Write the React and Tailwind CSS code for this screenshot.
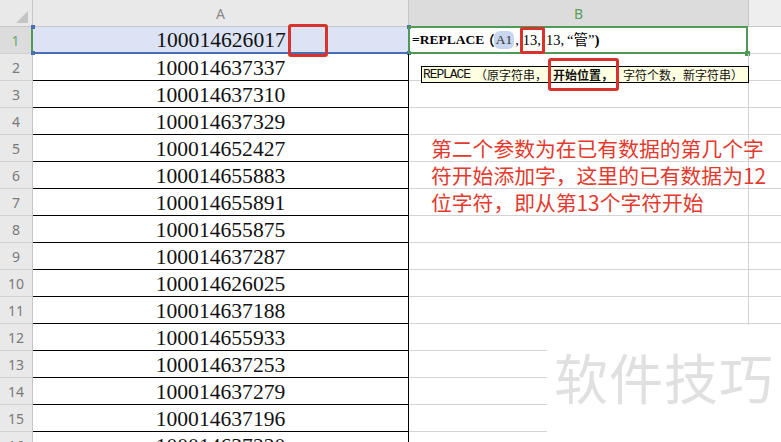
import React from "react";

const rows = [
  "100014626017",
  "100014637337",
  "100014637310",
  "100014637329",
  "100014652427",
  "100014655883",
  "100014655891",
  "100014655875",
  "100014637287",
  "100014626025",
  "100014637188",
  "100014655933",
  "100014637253",
  "100014637279",
  "100014637196",
  "100014637220",
];

const serif = { fontFamily: '"Liberation Serif", "Noto Sans CJK SC", serif' };
const cjk = { fontFamily: '"Noto Sans CJK SC", sans-serif' };

export default function App() {
  return (
    <div className="relative w-[781px] h-[442px] overflow-hidden bg-white">
      {/* column header */}
      <div className="flex h-[27px] border-b border-[#c6c6c6] bg-[#e9e9e9]">
        <div className="w-[33px] shrink-0 border-r border-[#c6c6c6] flex items-end justify-end pr-[4px] pb-[3px]">
          <svg width="12" height="12" viewBox="0 0 12 12">
            <polygon points="12,0 12,12 0,12" fill="#c4c4c4" />
          </svg>
        </div>
        <div
          className="w-[376px] shrink-0 border-r border-[#c6c6c6] flex items-center justify-center text-[14px] text-[#8a8a8a]"
          style={{ fontFamily: '"Noto Sans", sans-serif' }}
        >
          A
        </div>
        <div
          className="w-[340px] shrink-0 border-r border-[#c6c6c6] bg-[#dcdcdc] flex items-center justify-center text-[14px] text-[#5e9e5e]"
          style={{ fontFamily: '"Noto Sans", sans-serif' }}
        >
          B
        </div>
        <div className="flex-1 bg-[#eeeeee]" />
      </div>

      {rows.map((v, i) => {
        const sel = i === 0;
        return (
          <div key={i} className="flex h-[27px]">
            <div
              className={
                "w-[33px] shrink-0 flex items-center justify-center text-[14px] border-b border-[#d2d2d2] " +
                (sel
                  ? "bg-[#dcdcdc] text-[#6aa86a] border-r-2 border-r-[#4f9a4f]"
                  : "bg-[#e9e9e9] text-[#7a7a7a] border-r border-r-[#c6c6c6]")
              }
              style={{ fontFamily: '"Noto Sans", sans-serif' }}
            >
              {i + 1}
            </div>
            <div
              className={
                "relative w-[376px] shrink-0 flex items-center justify-center pt-[3px] text-[21.6px] text-[#111] leading-none " +
                (sel
                  ? "bg-[#dbe3f4] border-b-2 border-[#4a6fb5]"
                  : "border-b border-r border-black")
              }
              style={serif}
            >
              {v}
              {sel && (
                <>
                  <span className="absolute left-[-2px] top-[-2px] w-[4px] h-[4px] bg-[#4a6fb5]" />
                  <span className="absolute left-[-2px] bottom-[-3px] w-[4px] h-[4px] bg-[#4a6fb5]" />
                  <span className="absolute right-[-2px] top-[-2px] w-[4px] h-[4px] bg-[#4a6fb5]" />
                  <span className="absolute right-[-2px] bottom-[-3px] w-[4px] h-[4px] bg-[#4a6fb5]" />
                </>
              )}
            </div>
            <div
              className={
                "relative w-[340px] shrink-0 " +
                (sel ? "border-2 border-[#4f9a57] -ml-[1px] mr-[1px] -mt-[1px] h-[28px]" : "border-b border-r border-[#d4d4d4]")
              }
            >
              {sel && (
                <>
                  <div className="flex items-center h-full pl-[2px] text-[14.5px] text-black whitespace-nowrap leading-none">
                    <span className="font-bold text-[13.5px]" style={serif}>=REPLACE</span>
                    <span className="-ml-[3px] font-bold text-[13.5px]" style={cjk}>（</span>
                    <span className="-ml-[1px] px-[2px] py-[2px] rounded-[6px] bg-[#c9d6ef] text-[#333] text-[13.5px]" style={serif}>A1</span>
                    <span className="ml-[1px]" style={serif}>,</span>
                    <span className="ml-[4px]" style={serif}>13,</span>
                    <span className="ml-[5px]" style={serif}>13,</span>
                    <span className="ml-[3px]" style={serif}>“管”</span>
                    <span className="font-bold text-[15px]" style={serif}>)</span>
                  </div>
                  <span className="absolute right-[-4px] bottom-[-4px] w-[5px] h-[5px] bg-[#4f9a57]" />
                </>
              )}
            </div>
            <div className="flex-1 border-b border-[#d4d4d4]" />
          </div>
        );
      })}

      {/* tooltip */}
      <div className="absolute left-[421px] top-[66px] w-[328px] h-[17px] border border-black bg-[#ffffe1] flex items-center pl-[1px] text-[12px] text-[#111] whitespace-nowrap leading-none">
        <span className="text-[13px] tracking-[-1.1px]" style={{ fontFamily: '"Liberation Mono", monospace' }}>REPLACE</span>
        <span className="ml-[5px]" style={cjk}>（原字符串，</span>
        <span className="ml-[6px] font-bold" style={cjk}>开始位置，</span>
        <span className="ml-[10px]" style={cjk}>字符个数，新字符串）</span>
      </div>

      {/* red boxes */}
      <div className="absolute left-[288px] top-[24px] w-[40px] h-[33px] border-[3px] border-[#d8322c] rounded-[3px]" />
      <div className="absolute left-[520px] top-[27px] w-[25px] h-[27px] border-[3px] border-[#d8322c] rounded-[2px]" />
      <div className="absolute left-[548px] top-[58px] w-[71px] h-[33px] border-[3px] border-[#d8322c] rounded-[3px]" />

      {/* annotation */}
      <div
        className="absolute left-[431px] top-[135px] w-[345px] text-[20.8px] leading-[27px] text-[#e23a2e]"
        style={cjk}
      >
        第二个参数为在已有数据的第几个字
        <br />
        符开始添加字，这里的已有数据为12
        <br />
        位字符，即从第13个字符开始
      </div>

      {/* watermark */}
      <div className="absolute left-[547px] top-[325px] right-0 bottom-0 bg-white flex items-start pl-[7px] pt-[25px]">
        <span className="text-[54px] leading-none text-[#e0e0e0] tracking-[1px]" style={cjk}>
          软件技巧
        </span>
      </div>
    </div>
  );
}
